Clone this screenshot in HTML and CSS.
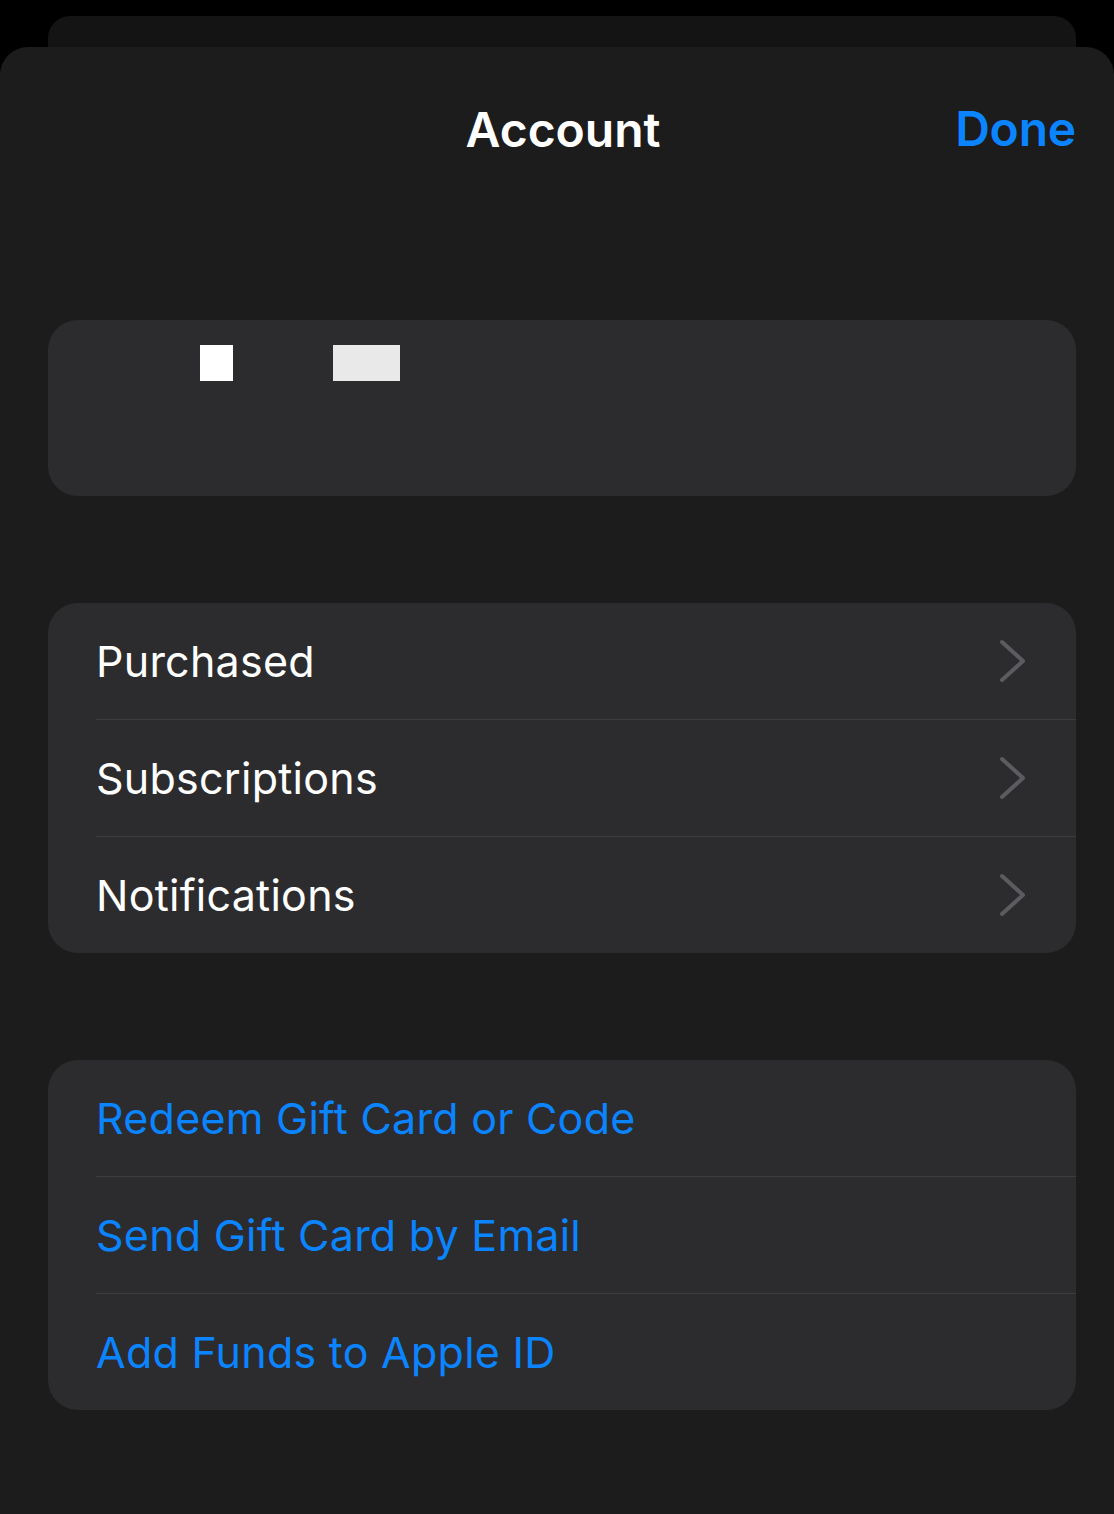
FILE: index.html
```html
<!DOCTYPE html>
<html lang="en">
<head>
    <meta charset="UTF-8">
    <meta name="viewport" content="width=device-width, initial-scale=1.0">
    <title>Account</title>
    <link rel="stylesheet" href="styles.css">
</head>
<body>
    <div class="back-card"></div>
    <div class="sheet">
        <header class="nav-bar">
            <span></span>
            <h1 class="nav-title">Account</h1>
            <a class="nav-done" href="#">Done</a>
        </header>

        <section class="card profile">
            <span class="blot blot-a"></span>
            <span class="blot blot-b"></span>
        </section>

        <section class="card list">
            <a class="row" href="#">
                <span>Purchased</span>
                <svg class="chevron" viewBox="0 0 30 44"><path d="M3 3 L24 22 L3 41"/></svg>
            </a>
            <a class="row" href="#">
                <span>Subscriptions</span>
                <svg class="chevron" viewBox="0 0 30 44"><path d="M3 3 L24 22 L3 41"/></svg>
            </a>
            <a class="row" href="#">
                <span>Notifications</span>
                <svg class="chevron" viewBox="0 0 30 44"><path d="M3 3 L24 22 L3 41"/></svg>
            </a>
        </section>

        <section class="card list">
            <a class="row link" href="#">Redeem Gift Card or Code</a>
            <a class="row link" href="#">Send Gift Card by Email</a>
            <a class="row link" href="#">Add Funds to Apple ID</a>
        </section>
    </div>
</body>
</html>
```

FILE: styles.css
```css
body {
    margin: 0;
    padding: 0;
    background-color: #000;
    font-family: Inter, "Noto Sans", sans-serif;
    color: #fff;
    overflow: hidden;
}

/* la hoja de atrás que asoma arriba */
.back-card {
    margin: 16px 38px 0 48px;
    height: 31px;
    background-color: #141414;
    border-radius: 22px 22px 0 0;
}

.sheet {
    background-color: #1c1c1c;
    border-radius: 28px 28px 0 0;
    min-height: 1467px;
    padding: 0 38px 0 48px;
}

.nav-bar {
    display: grid;
    grid-template-columns: 1fr auto 1fr;
    align-items: start;
    height: 170px;
    padding-top: 53px;
    box-sizing: border-box;
}
.nav-title {
    margin: 0 0 0 2px;
    font-size: 48px;
    font-weight: 600;
    letter-spacing: 0;
}
.nav-done {
    justify-self: end;
    color: #0a84ff;
    text-decoration: none;
    font-size: 48px;
    font-weight: 600;
    letter-spacing: -0.2px;
    line-height: 58px;
}

.card {
    background-color: #2c2c2e;
    border-radius: 30px;
}

.profile {
    height: 176px;
    margin-top: 103px;
    position: relative;
}
.blot {
    position: absolute;
    top: 25px;
    height: 36px;
}
.blot-a {
    left: 152px;
    width: 33px;
    background-color: #fff;
}
.blot-b {
    left: 285px;
    width: 67px;
    background-color: #e9e9e9;
}

.list {
    margin-top: 107px;
    padding-left: 48px;
    overflow: hidden;
}
.row {
    display: flex;
    align-items: center;
    justify-content: space-between;
    height: 116px;
    padding-right: 47px;
    border-top: 1px solid #3d3d40;
    color: #fff;
    text-decoration: none;
    font-size: 43px;
    letter-spacing: 0.25px;
}
.row:first-child {
    border-top: none;
}
.row span {
    padding-bottom: 0;
}
.link {
    color: #0a84ff;
}

.chevron {
    width: 30px;
    height: 44px;
    fill: none;
    stroke: #5c5c60;
    stroke-width: 4;
    stroke-linecap: round;
    stroke-linejoin: round;
}
```
